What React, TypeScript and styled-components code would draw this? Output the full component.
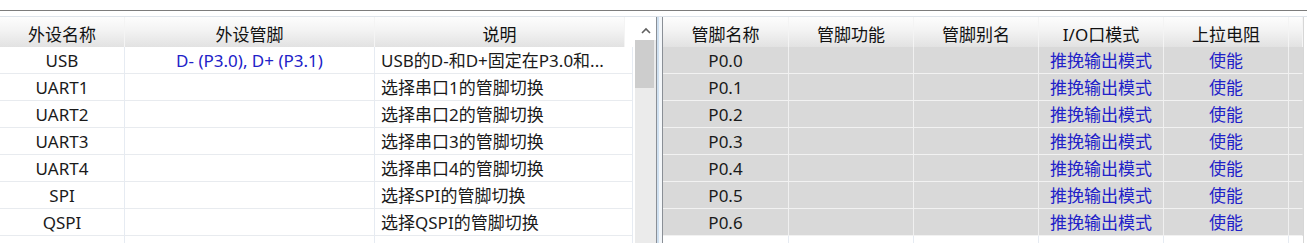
import React from "react";
import styled, { createGlobalStyle } from "styled-components";

const GlobalStyle = createGlobalStyle`
  html, body { margin: 0; padding: 0; background: #ffffff; }
  body {
    font-family: "Noto Sans", "Noto Sans CJK SC", sans-serif;
    font-size: 17px;
    color: #1a1a1a;
    overflow: hidden;
  }
`;

const Page = styled.div`
  width: 1307px;
  height: 243px;
  padding-top: 10px;
  box-sizing: border-box;
  overflow: hidden;
`;

const Frame = styled.div`
  border-top: 1px solid #7c7c7c;
  padding-top: 5px;
  height: 232px;
  box-sizing: border-box;
`;

const Split = styled.div`
  display: flex;
  height: 100%;
  border-top: 1px solid #dde3ea;
`;

const LeftPanel = styled.div`
  display: flex;
  width: 657px;
  border-right: 1px solid #8a8f96;
  box-sizing: border-box;
  overflow: hidden;
`;

const Splitter = styled.div`
  width: 5px;
  background: #f4f7fa;
  border-left: 2px solid #cfe0f0;
  box-sizing: border-box;
`;

const RightPanel = styled.div`
  width: 642px;
  border-left: 1px solid #8a8f96;
  border-right: 1px solid #d6d6d6;
  box-sizing: border-box;
  overflow: hidden;
`;

const Table = styled.div<{ $w: number }>`
  width: ${(p) => p.$w}px;
  flex: none;
  display: flex;
  flex-direction: column;
`;

const HeaderRow = styled.div`
  display: flex;
  height: 30px;
  flex: none;
`;

const HeaderCell = styled.div<{ $w: number; $blank?: boolean }>`
  width: ${(p) => p.$w}px;
  flex: none;
  box-sizing: border-box;
  display: flex;
  align-items: center;
  justify-content: center;
  padding-top: 2px;
  background: ${(p) =>
    p.$blank ? "#ffffff" : "linear-gradient(#fdfdfd 0%, #f3f3f3 45%, #e2e2e2 100%)"};
  border-right: 1px solid ${(p) => (p.$blank ? "transparent" : "#f4f4f4")};
  color: #111;
  white-space: nowrap;
`;

const Row = styled.div<{ $gray?: boolean }>`
  display: flex;
  height: 27px;
  flex: none;
  background: ${(p) => (p.$gray ? "#d9d9d9" : "#ffffff")};
`;

const Cell = styled.div<{
  $w: number;
  $align?: "left" | "center";
  $blue?: boolean;
  $gray?: boolean;
  $last?: boolean;
}>`
  width: ${(p) => p.$w}px;
  flex: none;
  box-sizing: border-box;
  height: 27px;
  line-height: 25px;
  padding: 1px 6px 0;
  text-align: ${(p) => p.$align ?? "center"};
  color: ${(p) => (p.$blue ? "#2121c8" : "#1a1a1a")};
  border-bottom: 1px solid ${(p) => (p.$gray ? "#f2f2f2" : "#e8ebef")};
  border-right: 1px solid
    ${(p) => (p.$last ? "transparent" : p.$gray ? "#f0f0f0" : "#e6ebf2")};
  white-space: nowrap;
  overflow: hidden;
`;

const ScrollBar = styled.div`
  width: 21px;
  margin-left: 2px;
  flex: none;
  display: flex;
  flex-direction: column;
  background: #ebebeb;
`;

const ScrollButton = styled.div`
  height: 23px;
  padding-top: 3px;
  box-sizing: border-box;
  background: #ffffff;
  display: flex;
  align-items: center;
  justify-content: center;
`;

const ScrollThumb = styled.div`
  height: 48px;
  margin-right: 2px;
  background: #cdcdcd;
`;

const leftCols = [125, 250, 258];
const leftRows: [string, string, string][] = [
  ["USB", "D- (P3.0), D+ (P3.1)", "USB的D-和D+固定在P3.0和..."],
  ["UART1", "", "选择串口1的管脚切换"],
  ["UART2", "", "选择串口2的管脚切换"],
  ["UART3", "", "选择串口3的管脚切换"],
  ["UART4", "", "选择串口4的管脚切换"],
  ["SPI", "", "选择SPI的管脚切换"],
  ["QSPI", "", "选择QSPI的管脚切换"],
  ["", "", ""],
];

const rightCols = [126, 125, 125, 125, 125, 14];
const rightHeaders = ["管脚名称", "管脚功能", "管脚别名", "I/O口模式", "上拉电阻", ""];
const pins = ["P0.0", "P0.1", "P0.2", "P0.3", "P0.4", "P0.5", "P0.6"];

export default function App() {
  return (
    <>
      <GlobalStyle />
      <Page>
        <Frame>
          <Split>
            <LeftPanel>
              <Table $w={633}>
                <HeaderRow>
                  <HeaderCell $w={125}>外设名称</HeaderCell>
                  <HeaderCell $w={250}>外设管脚</HeaderCell>
                  <HeaderCell $w={250}>说明</HeaderCell>
                  <HeaderCell $w={8} $blank />
                </HeaderRow>
                {leftRows.map((r, i) => (
                  <Row key={i}>
                    <Cell $w={leftCols[0]}>{r[0]}</Cell>
                    <Cell $w={leftCols[1]} $blue>
                      {r[1]}
                    </Cell>
                    <Cell $w={leftCols[2]} $align="left">
                      {r[2]}
                    </Cell>
                  </Row>
                ))}
              </Table>
              <ScrollBar>
                <ScrollButton>
                  <svg width="10" height="7" viewBox="0 0 10 7">
                    <path d="M1 6 L5 2 L9 6" fill="none" stroke="#606060" strokeWidth="1.6" />
                  </svg>
                </ScrollButton>
                <ScrollThumb />
              </ScrollBar>
            </LeftPanel>
            <Splitter />
            <RightPanel>
              <Table $w={640}>
                <HeaderRow>
                  {rightHeaders.map((h, i) => (
                    <HeaderCell key={i} $w={rightCols[i]}>
                      {h}
                    </HeaderCell>
                  ))}
                </HeaderRow>
                {pins.map((p) => (
                  <Row key={p} $gray>
                    <Cell $w={rightCols[0]} $gray>{p}</Cell>
                    <Cell $w={rightCols[1]} $gray />
                    <Cell $w={rightCols[2]} $gray />
                    <Cell $w={rightCols[3]} $gray $blue>推挽输出模式</Cell>
                    <Cell $w={rightCols[4]} $gray $blue>使能</Cell>
                    <Cell $w={rightCols[5]} $gray $last />
                  </Row>
                ))}
                <Row>
                  {rightCols.map((w, i) => (
                    <Cell key={i} $w={w} $last={i === rightCols.length - 1} />
                  ))}
                </Row>
              </Table>
            </RightPanel>
          </Split>
        </Frame>
      </Page>
    </>
  );
}
